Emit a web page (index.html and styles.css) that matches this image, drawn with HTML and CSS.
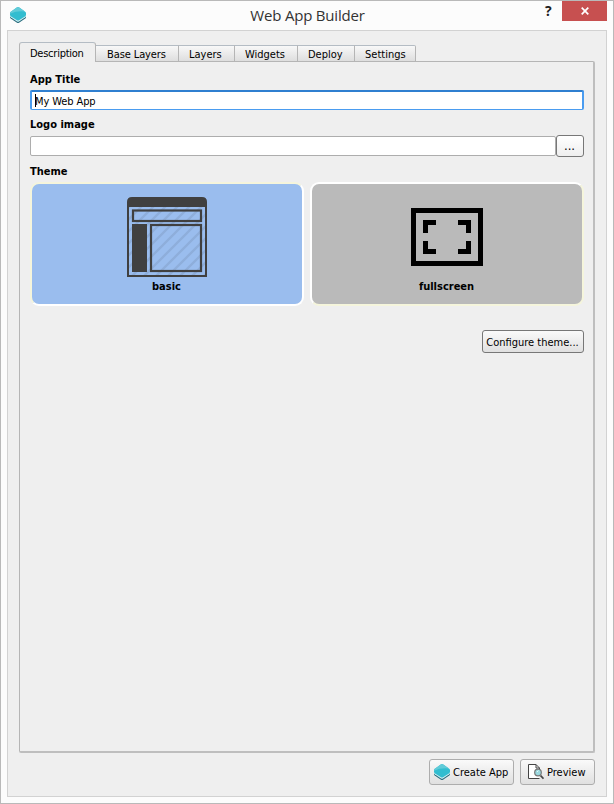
FILE: index.html
```html
<!DOCTYPE html>
<html lang="en">
<head>
<meta charset="utf-8">
<title>Web App Builder</title>
<link rel="stylesheet" href="styles.css">
</head>
<body>
<svg width="0" height="0" class="defs">
  <defs>
    <symbol id="layers" viewBox="0 0 16 16">
      <path d="M0 7.8 L0 10.2 Q0 11 .7 11.5 L7 15.7 Q8 16.3 9 15.7 L15.3 11.5 Q16 11 16 10.2 L16 7.8Z" fill="#276c7d"/>
      <path d="M0 6.8 L0 9 Q0 9.8 .7 10.3 L7 14.4 Q8 15 9 14.4 L15.3 10.3 Q16 9.8 16 9 L16 6.8Z" fill="#d5f0f3"/>
      <path d="M.5 4.900 Q-.3 5.700 0 7.800 Q.1 8.700 .7 9.200 L7 13.300 Q8 13.900 9 13.300 L15.300 9.200 Q15.900 8.700 16 7.800 Q16.300 5.700 15.500 4.900 L9.300 .6 Q8 -.4 6.700 .6Z" fill="#32bdd0"/>
      <path d="M.5 4.900 L6.700 .6 Q8 -.4 9.300 .6 L15 4.600 Q7 3.600 0 6.800Z" fill="#61cbd8"/>
    </symbol>
    <pattern id="stripes" width="12" height="12" patternUnits="userSpaceOnUse">
      <path d="M-3 3 L3 -3 M-3 15 L15 -3 M9 15 L15 9" stroke="#8eaedb" stroke-width="2.400"/>
    </pattern>
  </defs>
</svg>
<div class="window">
  <header class="titlebar">
    <svg class="app-icon" width="16" height="16"><use href="#layers"/></svg>
    <h1>Web App Builder</h1>
    <span class="help">?</span>
    <button class="close" aria-label="Close"><svg width="8" height="8" viewBox="0 0 8 8"><path d="M.7 .7 L7.300 7.300 M7.300 .7 L.7 7.300" stroke="#fff" stroke-width="1.700"/></svg></button>
  </header>
  <main class="client">
    <nav class="tabs">
      <span class="tab active t-desc">Description</span>
      <span class="tab t-base">Base Layers</span>
      <span class="tab t-layers">Layers</span>
      <span class="tab t-widgets">Widgets</span>
      <span class="tab t-deploy">Deploy</span>
      <span class="tab t-settings">Settings</span>
    </nav>
    <section class="pane">
      <div class="label l-title">App Title</div>
      <div class="input focused"><i class="caret"></i><span>My Web App</span></div>
      <div class="label l-logo">Logo image</div>
      <div class="row">
        <div class="input logo"></div>
        <button class="btn browse">...</button>
      </div>
      <div class="label l-theme">Theme</div>
      <div class="themes">
        <div class="card basic">
          <svg width="80" height="80" viewBox="0 0 80 80">
            <rect x="1" y="8" width="78" height="71" fill="url(#stripes)"/>
            <path d="M0 10 V5 Q0 0 5 0 H75 Q80 0 80 5 V10Z" fill="#404040"/>
            <path d="M1 9 V79 H79 V9" fill="none" stroke="#404040" stroke-width="2"/>
            <rect x="6" y="13.500" width="68" height="10.500" fill="none" stroke="#404040" stroke-width="2.200"/>
            <rect x="5" y="27" width="15" height="48" fill="#404040"/>
            <rect x="24" y="28" width="50" height="46" fill="none" stroke="#404040" stroke-width="2.200"/>
          </svg>
          <b>basic</b>
        </div>
        <div class="card full">
          <svg width="80" height="80" viewBox="0 0 80 80">
            <rect x="6.500" y="13.500" width="67" height="53" fill="none" stroke="#000" stroke-width="5"/>
            <path d="M18.500 36 V25.500 H29 M51 25.500 H61.500 V36 M61.500 44 V54.500 H51 M29 54.500 H18.500 V44" fill="none" stroke="#000" stroke-width="5"/>
          </svg>
          <b>fullscreen</b>
        </div>
      </div>
      <button class="btn configure">Configure theme...</button>
    </section>
    <footer class="actions">
      <button class="btn create"><svg width="16" height="16"><use href="#layers"/></svg><span>Create App</span></button>
      <button class="btn preview"><svg width="16" height="16" viewBox="0 0 16 16">
        <path d="M11.500 14.500 H.5 V.5 H8 L11.500 4 V6" fill="#fff" stroke="#444"/>
        <path d="M8 .5 V4 H11.500" fill="none" stroke="#444"/>
        <path d="M12.500 11.500 L15.500 14.700" stroke="#444" stroke-width="1.800"/>
        <circle cx="10" cy="8.500" r="3.300" fill="#9bd9df" stroke="#777" stroke-width="1.200"/>
        <path d="M9 8 L10.500 6.500" stroke="#e1fafa"/>
      </svg><span>Preview</span></button>
    </footer>
  </main>
</div>
</body>
</html>
```
FILE: styles.css
```css
* { box-sizing: border-box; }
body { margin: 0; font: 11px/14px "DejaVu Sans Condensed", "DejaVu Sans", sans-serif; color: #000; }
.defs { position: absolute; }
.window { width: 614px; height: 804px; border: 1px solid #b9b9b9; background: #fcfcfc; padding: 0 6px 6px; }
.titlebar { height: 29px; display: flex; align-items: flex-start; }
.app-icon { margin: 6px 0 0 3px; }
h1 { margin: 4px 0 0; flex: 1; padding-left: 44px; text-align: center; font: 15px/21px "Open Sans", sans-serif; letter-spacing: -.2px; color: #333; }
.help { width: 8px; margin: 1px 9px 0 0; font: bold 14px/18px "Open Sans", sans-serif; color: #1e1e1e; }
.close { width: 45px; height: 20px; border: 0; padding: 0; background: #c75050; display: flex; align-items: center; justify-content: center; }
.client { height: 767px; border: 1px solid #d2d2d2; background: #efefef; padding: 11px 11px 0; display: flex; flex-direction: column; }
.tabs { height: 20px; display: flex; align-items: flex-end; }
.tab { height: 17px; border: 1px solid #b5b5b5; border-left: 0; border-top-color: #b4bcc4; background: linear-gradient(#f8f8f8, #dedede); line-height: 18px; padding-left: 10px; white-space: nowrap; }
.tab.active { height: 20px; border-left: 1px solid #b5b5b5; border-bottom: 0; border-radius: 3px 3px 0 0; background: #efefef; line-height: 21px; align-self: flex-start; position: relative; z-index: 1; letter-spacing: -.25px; }
.t-desc { width: 77px; }
.t-base { width: 83px; padding-left: 11px; letter-spacing: -.1px; }
.t-layers { width: 56px; }
.t-widgets { width: 63px; }
.t-deploy { width: 57px; }
.t-settings { width: 61px; border-radius: 0 2px 0 0; }
.pane { height: 692px; margin-top: -1px; border: 1px solid #b5b5b5; border-right: 2px solid #bebebe; border-bottom: 2px solid #bebebe; border-radius: 0 2px 2px 2px; padding: 11px 9px 0 10px; display: flex; flex-direction: column; }
.label, .card b { font-weight: bold; }
.label { line-height: 14px; white-space: nowrap; }
.input { height: 20px; border: 1px solid #adadad; border-radius: 2px; background: #fff; }
.input.focused { margin-top: 3px; border: 1px solid #4a9cf0; border-top: 2px solid #2f7fd0; border-right-width: 2px; border-left-width: 2px; line-height: 18px; padding-left: 3px; display: flex; align-items: center; letter-spacing: -.1px; }
.focused span { margin-top: 2px; margin-left: -1px; }
.caret { width: 1px; height: 13px; background: #000; }
.l-logo { margin-top: 8px; }
.row { display: flex; align-items: center; margin-top: 3px; }
.input.logo { width: 526px; }
.btn { margin: 0; padding: 0; font: inherit; color: #000; border: 1px solid #777; border-radius: 3px; background: linear-gradient(#fafafa, #e0e0e0); display: flex; align-items: center; justify-content: center; white-space: nowrap; }
.browse { width: 28px; height: 22px; background: linear-gradient(#fff, #eee); font-size: 13px; padding-right: 1px; }
.l-theme { margin-top: 8px; }
.themes { display: flex; gap: 6px; margin-top: 3px; }
.card { width: 274px; height: 124px; border: 2px solid #fff; border-radius: 9px; display: flex; flex-direction: column; align-items: center; }
.card svg { margin-top: 13px; }
.card b { margin-top: 3px; padding-right: 1px; }
.basic { background: #9abdee; border-color: #f5f5dc #fff #fff #f5f5dc; }
.full { background: #bababa; border-color: #fff #f5f5dc #f5f5dc #fff; }
.configure { width: 102px; height: 23px; align-self: flex-end; margin-top: 24px; padding: 2px 1px 0 0; }
.actions { display: flex; gap: 6px; justify-content: flex-end; margin-top: 6px; }
.actions .btn { height: 26px; border-color: #adadad; justify-content: flex-start; }
.actions span { margin: 1px 0 0 3px; }
.create { width: 85px; padding-left: 4px; }
.preview { width: 75px; padding-left: 7px; }
```
